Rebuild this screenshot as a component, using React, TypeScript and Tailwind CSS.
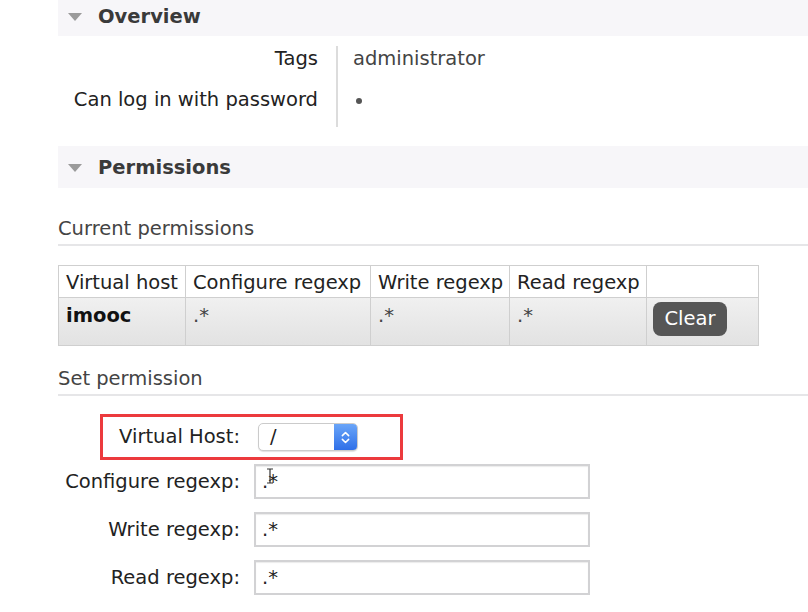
import { ChevronsUpDown } from "lucide-react";

function SectionBar({ title, className = "" }: { title: string; className?: string }) {
  return (
    <div className={"flex h-[42px] items-center bg-[#f7f6f9] pl-[10px] " + className}>
      <svg width="14" height="8" viewBox="0 0 14 8" className="mr-[16px]">
        <polygon points="0,0 14,0 7,8" fill="#9b9b9b" />
      </svg>
      <span className="font-bold text-[#3a3a3a]">{title}</span>
    </div>
  );
}

function SubHeading({ title }: { title: string }) {
  return (
    <div className="border-b-2 border-[#e6e6e8] pb-[3px] leading-[24px] text-[#444]">
      {title}
    </div>
  );
}

function FormInput({ label, value, className }: { label: string; value: string; className: string }) {
  return (
    <div className={"flex h-[35px] items-center " + className}>
      <label className="w-[182px] text-right text-[#222]">{label}</label>
      <div className="ml-[14px] flex h-[35px] w-[336px] items-center border-2 border-[#d2d2d4] bg-white pl-[6px] shadow-[inset_0_1px_1px_rgba(0,0,0,0.08)]">
        <span className="text-[#222]">{value}</span>
      </div>
    </div>
  );
}

export default function App() {
  return (
    <div className="h-[612px] w-[808px] overflow-hidden bg-white font-['DejaVu_Sans',Verdana,sans-serif] text-[19.5px] text-[#333]">
      <div className="ml-[58px] -mt-[6px]">
        <SectionBar title="Overview" className="pt-[4px]" />

        <div className="mt-[10px] flex">
          <div className="w-[260px] text-right text-[#222]">
            <div className="h-[24px] pt-[1px] leading-[24px]">Tags</div>
            <div className="mt-[17px] h-[24px] pt-[1px] leading-[24px]">Can log in with password</div>
          </div>
          <div className="ml-[18px] border-l-2 border-[#dcdcdc] pb-[16px] pl-[15px] text-[#444]">
            <div className="h-[24px] pt-[1px] leading-[24px]">administrator</div>
            <div className="mt-[17px] flex h-[24px] items-center pl-[3px] pt-[3px]">
              <span className="h-[6px] w-[6px] rounded-full bg-[#555]" />
            </div>
          </div>
        </div>

        <div className="mt-[19px]">
          <SectionBar title="Permissions" className="pt-[2px]" />
        </div>

        <div className="mt-[29px]">
          <SubHeading title="Current permissions" />
        </div>

        <table className="mt-[19px] w-[700px] table-fixed border-collapse leading-[24px]">
          <colgroup>
            <col className="w-[127px]" />
            <col className="w-[185px]" />
            <col className="w-[139px]" />
            <col className="w-[137px]" />
            <col className="w-[112px]" />
          </colgroup>
          <thead>
            <tr className="h-[32px] bg-white text-left">
              <th className="border border-[#cfcfcf] pl-[7px] pt-[3px] font-normal text-[#222]">Virtual host</th>
              <th className="border border-[#cfcfcf] pl-[7px] pt-[3px] font-normal text-[#222]">Configure regexp</th>
              <th className="border border-[#cfcfcf] pl-[7px] pt-[3px] font-normal text-[#222]">Write regexp</th>
              <th className="border border-[#cfcfcf] pl-[7px] pt-[3px] font-normal text-[#222]">Read regexp</th>
              <th className="border border-[#cfcfcf]"></th>
            </tr>
          </thead>
          <tbody>
            <tr className="h-[48px] bg-gradient-to-b from-[#f0f0f0] to-[#e2e2e2] align-top">
              <td className="border border-[#cfcfcf] pl-[7px] pt-[6px] font-bold text-[#111]">imooc</td>
              <td className="border border-[#cfcfcf] pl-[7px] pt-[6px] text-[#444]">.*</td>
              <td className="border border-[#cfcfcf] pl-[7px] pt-[6px] text-[#444]">.*</td>
              <td className="border border-[#cfcfcf] pl-[7px] pt-[6px] text-[#444]">.*</td>
              <td className="border border-[#cfcfcf] pl-[6px] pt-[4px]">
                <button className="block h-[34px] w-[74px] rounded-[8px] bg-[#565656] text-[19.5px] text-white">
                  Clear
                </button>
              </td>
            </tr>
          </tbody>
        </table>

        <div className="mt-[21px]">
          <SubHeading title="Set permission" />
        </div>

        <div className="relative mt-[18px] flex h-[46px] items-center">
          <label className="w-[182px] text-right text-[#222]">Virtual Host:</label>
          <div className="ml-[18px] flex h-[28px] w-[100px] items-stretch overflow-hidden rounded-[5px] border border-[#cbcbcb] bg-white shadow-[0_1px_1px_rgba(0,0,0,0.12)]">
            <span className="flex-1 pl-[11px] leading-[26px] text-[#222]">/</span>
            <span className="flex w-[23px] items-center justify-center bg-gradient-to-b from-[#6aa5f8] to-[#2f6fe8]">
              <ChevronsUpDown className="h-[15px] w-[15px] text-white" strokeWidth={2.5} />
            </span>
          </div>
          <div className="pointer-events-none absolute left-[42px] top-0 h-[46px] w-[303px] border-[3px] border-[#ec3a3d]" />
        </div>

        <div className="relative">
          <FormInput label="Configure regexp:" value=".*" className="mt-[4px]" />
          <svg width="8" height="16" viewBox="0 0 8 16" className="absolute left-[208px] top-[4px]">
            <path d="M1 1h6M4 1v14M1 15h6" stroke="#333" strokeWidth="1.2" fill="none" />
          </svg>
        </div>
        <FormInput label="Write regexp:" value=".*" className="mt-[13px]" />
        <FormInput label="Read regexp:" value=".*" className="mt-[13px]" />
      </div>
    </div>
  );
}
